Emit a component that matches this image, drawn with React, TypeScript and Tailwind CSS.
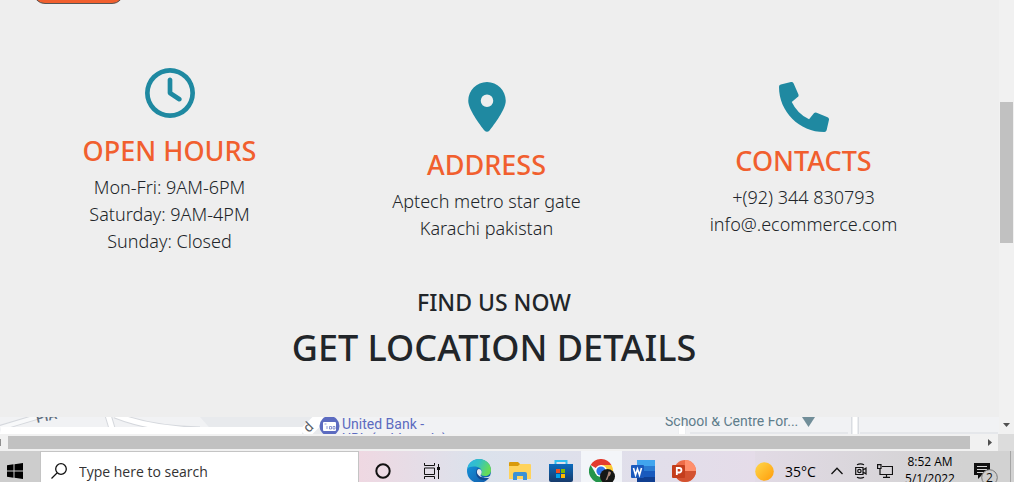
import React from "react";
import { FaPhoneAlt } from "react-icons/fa";
import { FaLocationDot, FaRegClock } from "react-icons/fa6";

type InfoProps = {
  icon: React.ReactNode;
  title: string;
  lines: string[];
  compact?: boolean;
};

function InfoColumn({ icon, title, lines, compact }: InfoProps) {
  return (
    <section className={compact ? "flex flex-col items-center pb-1" : "flex flex-col items-center"}>
      <div className="text-[50px] text-[#1f89a1]">{icon}</div>
      <h2
        className={
          compact
            ? "mt-3 mb-1.5 text-[27px] leading-[34px] font-medium text-[#f15f2e]"
            : "mt-4 mb-1.5 text-[27px] leading-[34px] font-medium text-[#f15f2e]"
        }
      >
        {title}
      </h2>
      <div className="text-center text-[18px] leading-[27px] font-light text-[#212529]">
        {lines.map((line) => (
          <p key={line}>{line}</p>
        ))}
      </div>
    </section>
  );
}

function MapStrip() {
  return (
    <div className="relative h-[17px] w-full overflow-hidden bg-[#f1f2f4] font-['Roboto',sans-serif]">
      <svg className="absolute top-0 left-0 h-[17px] w-[1000px]" viewBox="0 0 1000 17" aria-hidden="true">
        <path d="M200 0H330V17H215Z" fill="#e8eaed" />
        <path d="M0 11L50 -4" stroke="#d5d8dd" strokeWidth="6" />
        <path d="M0 11L50 -4" stroke="#f8f9fa" strokeWidth="4" />
        <path d="M108 -2L114 18M115 -2Q150 12 200 13" stroke="#d5d8dd" strokeWidth="7" fill="none" />
        <path d="M108 -2L114 18M115 -2Q150 12 200 13" stroke="#fff" strokeWidth="5" fill="none" />
        <path d="M1 10H302V17H0Z" fill="#fff" />
        <path d="M304 17L322 -1" stroke="#fff" strokeWidth="12" />
        <path d="M682 8V17M855 0V17" stroke="#dadde2" strokeWidth="8" />
        <path d="M682 8V17" stroke="#fff" strokeWidth="7" />
        <path d="M855 0V17" stroke="#fff" strokeWidth="5" />
        <path d="M690 16H848M860 16H998" stroke="#d9dce1" strokeWidth="1" />
        <circle cx="329.500" cy="9" r="10" fill="#5c6bc0" />
        <rect x="323" y="5" width="13" height="9" rx="1" fill="#fff" />
        <path d="M324.500 7h2M327 9v3M329.500 9.500h2v2.500h-2zM333 9.500h2v2.500h-2z" stroke="#5c6bc0" strokeWidth=".7" fill="none" />
        <path d="M802 0H815L808.500 10Z" fill="#718e99" />
      </svg>
      <span className="absolute -top-2 left-9 -rotate-12 text-[13px] leading-4 font-medium text-[#5b6b7b]">PIA</span>
      <span className="absolute top-0.5 left-[304px] -rotate-45 text-[14px] leading-4 text-[#555b63]">d</span>
      <p className="absolute top-0 left-[342px] text-[14px] leading-[15px] whitespace-nowrap text-[#5c6bc0]">
        United Bank -<br />UBL (ashley sdo)
      </p>
      <span className="absolute -top-1 left-[665px] text-[14px] leading-4 text-[#607d8b]">School &amp; Centre For...</span>
    </div>
  );
}

function VerticalScrollbar() {
  return (
    <div className="flex w-[15px] shrink-0 flex-col items-center bg-[#f1f1f1]" aria-hidden="true">
      <div className="h-[102px]" />
      <div className="h-[141px] w-[13px] bg-[#c1c1c1]" />
      <div className="flex-1" />
      <svg className="mb-[7px] h-1 w-[7px]" viewBox="0 0 7 4">
        <path d="M0 0H7L3.500 4Z" fill="#505050" />
      </svg>
    </div>
  );
}

function HorizontalScrollbar() {
  return (
    <div className="flex h-[17px] shrink-0 bg-[#f1f1f1]" aria-hidden="true">
      <div className="flex w-2 items-center">
        <div className="h-[7px] w-px bg-[#909090]" />
      </div>
      <div className="my-[2px] flex-1 bg-[#c1c1c1]" />
      <div className="flex w-7 items-center justify-end pr-[6px]">
        <svg className="h-[7px] w-1" viewBox="0 0 4 7">
          <path d="M0 0V7L4 3.500Z" fill="#505050" />
        </svg>
      </div>
      <div className="w-4 bg-[#dcdcdc]" />
    </div>
  );
}

function EdgeIcon() {
  return (
    <svg className="size-6" viewBox="0 0 24 24">
      <defs>
        <linearGradient id="edgeTop" x1="0" y1="0" x2="1" y2="0.4">
          <stop offset="0" stopColor="#2cb5e8" />
          <stop offset="0.5" stopColor="#35c1c4" />
          <stop offset="1" stopColor="#66dc57" />
        </linearGradient>
        <linearGradient id="edgeLow" x1="0" y1="0" x2="1" y2="1">
          <stop offset="0" stopColor="#159be0" />
          <stop offset="1" stopColor="#1255a5" />
        </linearGradient>
      </defs>
      <circle cx="12" cy="12" r="12" fill="url(#edgeLow)" />
      <path d="M.3 9.500C1.500 4 6 0 12 0c7 0 12 5 12 11 0 4-3 6-6 6-2.500 0-4.500-1-4-2 1.500-2 1-6-3.500-7C6 7 2 8 .3 9.500Z" fill="url(#edgeTop)" />
      <path d="M10 10c-3 6 2 12 8 11 2-.3 3.500-1.500 4.500-2.500-4 1.500-8.500.5-9.300-2.500-.4-2 1.300-2 .6-4-.8-2.300-2.800-3-3.800-2Z" fill="#12488f" />
      <path d="M14 15c1-1.500 1-3-.5-4.500-1-.8-2.500-.8-3.200.5-.8 2-.2 4 1 5 1 1.500 3 2.500 6 2.500 3 0 5-1 6-2l-.8 2c-2 1-7 1-9-2Z" fill="#e4e8f0" />
    </svg>
  );
}

function FolderIcon() {
  return (
    <svg className="h-[18px] w-[22px]" viewBox="0 0 22 18">
      <path d="M0 1q0-1 1-1h8l2 2v5H0Z" fill="#d99a0b" />
      <path d="M0 4h9l2-2h10q1 0 1 1v14H0Z" fill="#ffd35c" />
      <path d="M4 18v-6q0-2 2-2h10q2 0 2 2v6h-4v-4H8v4Z" fill="#3b91d6" />
    </svg>
  );
}

function StoreIcon() {
  return (
    <svg className="h-[22px] w-6" viewBox="0 0 24 22">
      <defs>
        <linearGradient id="store" x1="0" y1="0" x2="0" y2="1">
          <stop offset="0" stopColor="#0c6bbd" />
          <stop offset="1" stopColor="#173b6c" />
        </linearGradient>
      </defs>
      <path d="M6.500 5V1h11v4" fill="none" stroke="#32bff1" strokeWidth="2" />
      <path d="M0 4h24v16q0 2-2 2H2q-2 0-2-2Z" fill="url(#store)" />
      <path d="M7 9h4v4H7Z" fill="#f25022" />
      <path d="M12 9h4v4h-4Z" fill="#7fba00" />
      <path d="M7 14h4v4H7Z" fill="#00a4ef" />
      <path d="M12 14h4v4h-4Z" fill="#ffb900" />
    </svg>
  );
}

function ChromeIcon() {
  return (
    <svg className="size-[26px]" viewBox="0 0 26 26">
      <path d="M12 12L1.600 6A12 12 0 0 1 22.400 6Z" fill="#e33b2e" />
      <path d="M12 12V6h10.400A12 12 0 0 1 12 24l5-9Z" fill="#fcc934" />
      <path d="M12 12l5 3-5 9A12 12 0 0 1 1.600 6L7 15Z" fill="#24954b" />
      <circle cx="12" cy="12" r="6" fill="#fff" />
      <circle cx="12" cy="12" r="4.600" fill="#2e75e8" />
      <circle cx="18.500" cy="17.500" r="7.500" fill="#151716" />
      <path d="M19.500 12.500q2.500-.5 2.500 1.500l-1 2.500-1.500 1-1 3-2 1 2-5Z" fill="#a98678" />
    </svg>
  );
}

function WordIcon() {
  return (
    <svg className="h-[22px] w-6" viewBox="0 0 24 22">
      <path d="M6 0h18v6H6Z" fill="#41a5ee" />
      <path d="M6 6h18v5H6Z" fill="#2b7cd3" />
      <path d="M6 11h18v6H6Z" fill="#185abd" />
      <path d="M6 17h18v5H6Z" fill="#103f91" />
      <rect y="5" width="13" height="13" rx="1" fill="#1b5abd" />
      <path d="M2.500 8l2 7 2-6 2 6 2-7" fill="none" stroke="#fff" strokeWidth="1.600" />
    </svg>
  );
}

function PowerPointIcon() {
  return (
    <svg className="h-[22px] w-6" viewBox="0 0 24 22">
      <circle cx="13" cy="11" r="11" fill="#ed6c47" />
      <path d="M13 0a11 11 0 0 1 11 11H13Z" fill="#ff8f6b" />
      <path d="M2 11h22a11 11 0 0 1-22 0Z" fill="#d35230" />
      <rect y="5" width="13" height="13" rx="1" fill="#c43e1c" />
      <path d="M4.800 15V8h2.400a2 2 0 0 1 0 4.500H5" fill="none" stroke="#fff" strokeWidth="1.800" />
    </svg>
  );
}

function AppButton({ label, active, children }: { label: string; active?: boolean; children: React.ReactNode }) {
  return (
    <button
      type="button"
      aria-label={label}
      className={
        active
          ? "flex h-10 w-[41px] items-center justify-center bg-[#f3f5f9] pt-0.5"
          : "flex h-10 w-[41px] items-center justify-center"
      }
    >
      {children}
    </button>
  );
}

function Taskbar() {
  return (
    <footer className="flex h-[31px] shrink-0 items-start overflow-hidden bg-linear-to-r from-[#cfcfcf] from-5% via-[#e5dce9] via-70% to-[#d2d2d2] to-95% font-['Open_Sans',sans-serif] text-black">
      <button type="button" aria-label="Start" className="flex h-10 w-10 shrink-0 items-center justify-center bg-[#cdcdcd] pr-2.5">
        <svg className="size-4" viewBox="0 0 16 16">
          <path d="M0 2.200L6.500 1.300V7.500H0ZM7.500 1.200L16 0V7.500H7.500ZM0 8.500H6.500V14.700L0 13.800ZM7.500 8.500H16V16L7.500 14.800Z" />
        </svg>
      </button>
      <label className="flex h-10 w-[319px] shrink-0 items-center gap-3 border border-[#c4c4c4] bg-white pl-[10px]">
        <svg className="size-4 shrink-0" viewBox="0 0 16 16" fill="none" stroke="#111" strokeWidth="1.300">
          <circle cx="10" cy="6" r="5.300" />
          <path d="M6 10L.5 15.500" />
        </svg>
        <input
          type="text"
          aria-label="Search"
          placeholder="Type here to search"
          className="min-w-0 flex-1 bg-transparent text-[14px] outline-none placeholder:text-[#333]"
        />
      </label>
      <div className="flex flex-1 bg-linear-to-r from-[#efd8e2] via-[#dbe2ec] via-30% to-[#e5dce9]">
        <div className="flex w-[99px] items-center justify-between pr-[18px] pl-4">
          <svg className="size-4" viewBox="0 0 16 16">
            <circle cx="8" cy="8" r="6.700" fill="none" stroke="#111" strokeWidth="2" />
          </svg>
          <svg className="size-4" viewBox="0 0 16 16" fill="none" stroke="#111">
            <path d="M.5 0V2.500H10.500V0M.5 16V13.500H10.500V16M.5 5H10.500V11.500H.5ZM14.500 1V16" />
            <path d="M13 4h3v3h-3Z" fill="#111" stroke="none" />
          </svg>
        </div>
        <AppButton label="Edge"><EdgeIcon /></AppButton>
        <AppButton label="File Explorer"><FolderIcon /></AppButton>
        <AppButton label="Store"><StoreIcon /></AppButton>
        <AppButton label="Chrome" active><ChromeIcon /></AppButton>
        <AppButton label="Word"><WordIcon /></AppButton>
        <AppButton label="PowerPoint"><PowerPointIcon /></AppButton>
      </div>
      <div className="flex h-10 shrink-0 items-center">
        <svg className="size-[19px]" viewBox="0 0 19 19">
          <defs>
            <linearGradient id="sun" x1="0" y1="0" x2="1" y2="1">
              <stop offset="0" stopColor="#ffd84a" />
              <stop offset="1" stopColor="#ff9c0a" />
            </linearGradient>
          </defs>
          <circle cx="9.500" cy="9.500" r="9.300" fill="url(#sun)" />
        </svg>
        <span className="ml-[11px] w-[46px] text-[14px]">35°C</span>
        <svg className="h-2 w-3" viewBox="0 0 12 8" fill="none" stroke="#111" strokeWidth="1.300">
          <path d="M.5 7L6 1.200 11.500 7" />
        </svg>
        <svg className="ml-3 h-4 w-3" viewBox="0 0 12 16" fill="none" stroke="#111" strokeWidth="1.200">
          <path d="M2 1.800Q5.500 0 9 1.800M2 14.200Q5.500 16 9 14.200M.7 4.500H8V11.500H.7ZM8 7l3-2v6L8 9" />
          <circle cx="4.400" cy="8" r="1.700" />
        </svg>
        <svg className="ml-[10px] h-[14px] w-4" viewBox="0 0 16 14" fill="none" stroke="#111" strokeWidth="1.200">
          <path d="M5 2.500H15.500V10.500H3V4.500M9.500 10.500V13.400M6 13.400H13M.6.600H4V4.500H.6Z" />
        </svg>
      </div>
      <div className="flex h-10 w-[78px] shrink-0 flex-col items-center pt-[2px] pr-1 text-[12px] leading-[17px] whitespace-nowrap">
        <span>8:52 AM</span>
        <span>5/1/2022</span>
      </div>
      <div className="flex h-10 w-[43px] shrink-0 items-start pt-3 pl-[3px]">
        <svg className="h-5 w-6" viewBox="0 0 24 20">
          <path d="M0 0H16V12H8L4 16V12H0Z" fill="#111" />
          <path d="M3 3.500H13M3 6.500H13M3 9.500H10" stroke="#d5d5d5" />
          <circle cx="15.500" cy="14.500" r="7.800" fill="#cecece" stroke="#777" />
          <text x="12" y="19" fontSize="12" fontFamily="Open Sans" fill="#111">2</text>
        </svg>
        <div className="-mt-3 ml-3 h-10 w-px bg-[#a5a5a5]" />
      </div>
    </footer>
  );
}

export default function App() {
  return (
    <div className="flex h-screen flex-col overflow-hidden bg-[#eeeeee] font-['Noto_Sans',sans-serif]">
      <div className="flex min-h-0 flex-1">
        <main className="flex min-w-0 flex-1 flex-col overflow-hidden">
          <div className="flex h-[68px] shrink-0 items-start pl-[33px]">
            <button type="button" aria-label="Send" className="-mt-8 h-9 w-[91px] rounded-xl border border-[#555] bg-[#f15f2e]" />
          </div>
          <div className="grid grid-cols-3 items-center pr-[37px] pl-[11px]">
            <InfoColumn
              icon={<FaRegClock />}
              title="OPEN HOURS"
              lines={["Mon-Fri: 9AM-6PM", "Saturday: 9AM-4PM", "Sunday: Closed"]}
            />
            <InfoColumn icon={<FaLocationDot />} title="ADDRESS" lines={["Aptech metro star gate", "Karachi pakistan"]} />
            <InfoColumn icon={<FaPhoneAlt />} title="CONTACTS" lines={["+(92) 344 830793", "info@.ecommerce.com"]} compact />
          </div>
          <section className="mt-8 pr-[11px] text-center font-medium text-[#212529]">
            <h3 className="text-[23px] leading-[30px]">FIND US NOW</h3>
            <h1 className="mt-2 text-[36px] leading-[46px]">GET LOCATION DETAILS</h1>
          </section>
          <div className="mt-auto">
            <MapStrip />
          </div>
        </main>
        <VerticalScrollbar />
      </div>
      <HorizontalScrollbar />
      <Taskbar />
    </div>
  );
}
